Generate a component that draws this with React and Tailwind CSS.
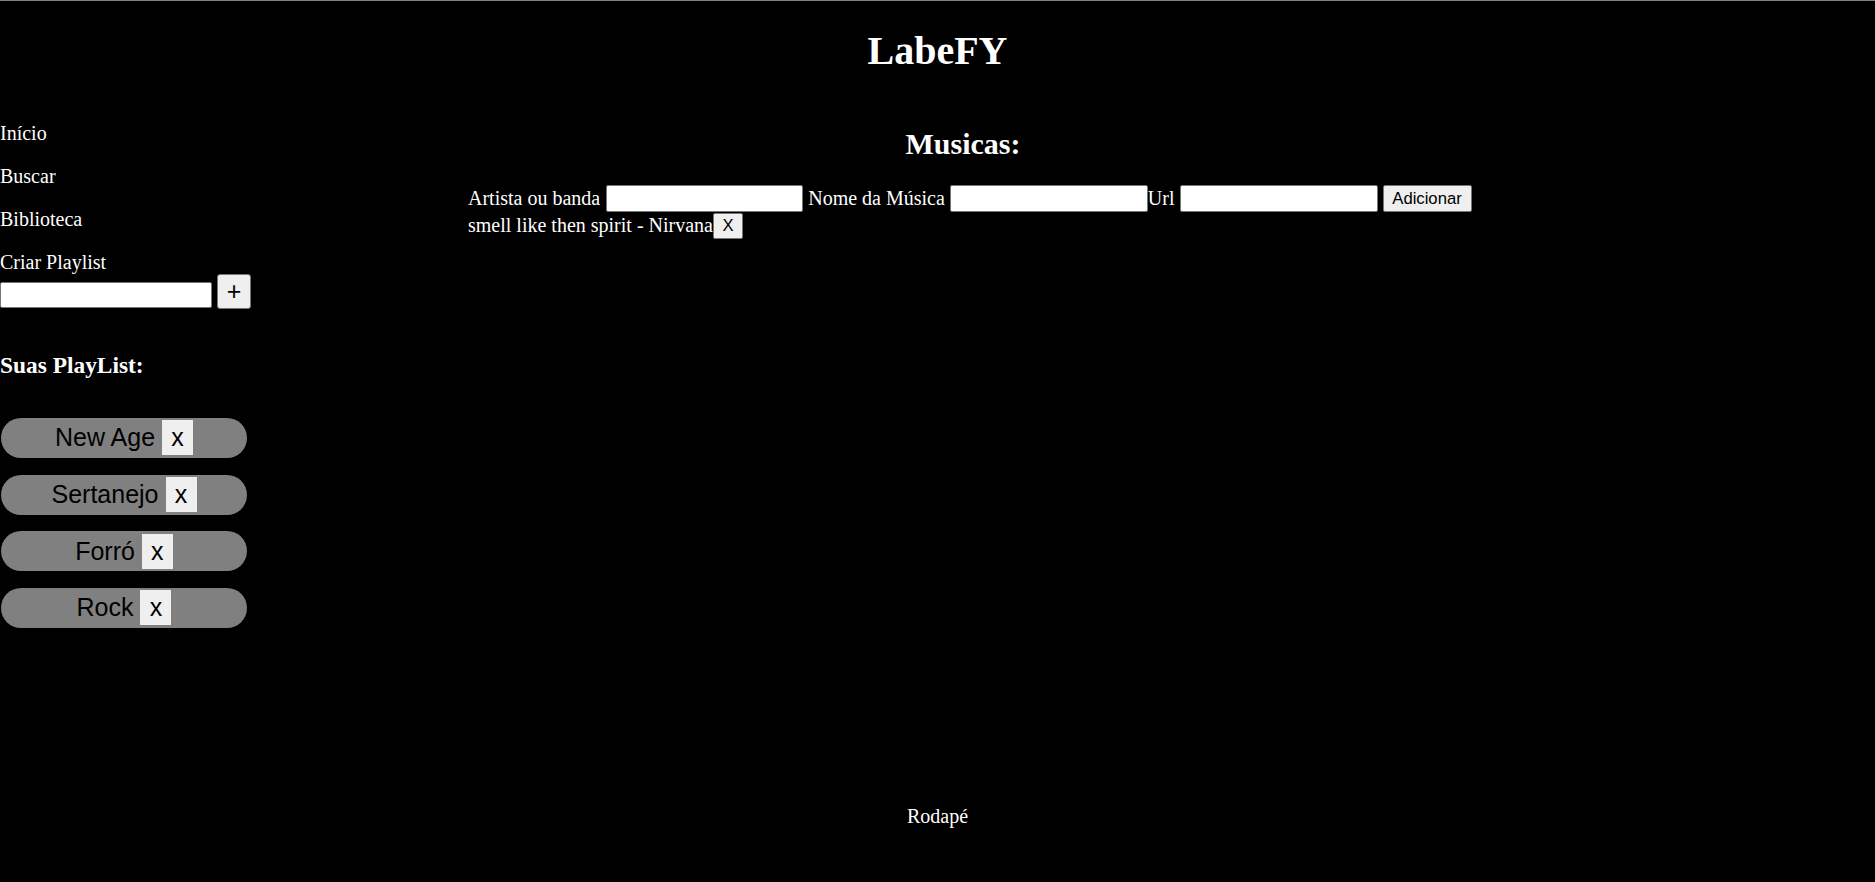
import { useState } from "react";

export default function App() {
  const [playlists, setPlaylists] = useState(["New Age", "Sertanejo", "Forró", "Rock"]);
  const [novaPlaylist, setNovaPlaylist] = useState("");
  const [musicas, setMusicas] = useState([{ nome: "smell like then spirit", artista: "Nirvana", url: "" }]);
  const [form, setForm] = useState({ artista: "", nome: "", url: "" });

  const handleChange = (e) => { setForm({ ...form, [e.target.name]: e.target.value }); };
  const adicionarPlaylist = () => {
    if (!novaPlaylist) return;
    setPlaylists([...playlists, novaPlaylist]); setNovaPlaylist("");
  };
  const adicionarMusica = () => {
    if (!form.nome) return;
    setMusicas([...musicas, form]); setForm({ artista: "", nome: "", url: "" });
  };

  return (
    <div className="h-[882px] flex flex-col bg-black text-white border-t border-[#808080] font-['Liberation_Serif',serif] text-[20px] leading-[23px]">
      <header className="h-[101px] pt-[27px] text-center">
        <h1 className="text-[40px] leading-[46px] font-bold">LabeFY</h1>
      </header>

      <div className="flex flex-1">
        {/* Menu lateral */}
        <aside className="w-[468px] shrink-0 pt-[20px]">
          {["Início", "Buscar", "Biblioteca"].map((item) => (
            <p key={item} className="mb-[20px]">{item}</p>
          ))}
          <p>Criar Playlist</p>
          <div className="flex items-end">
            <input value={novaPlaylist} onChange={(e) => setNovaPlaylist(e.target.value)}
              className="w-[212px] h-[26px] mb-[1px] px-[2px] bg-white border border-[#767676] rounded-[2px] text-black text-[16.67px] font-['Liberation_Sans',sans-serif] outline-none" />
            <button onClick={adicionarPlaylist}
              className="ml-[5px] w-[34px] h-[35px] bg-[#efefef] border border-[#767676] rounded-[3px] text-black text-[25px] leading-none font-['Liberation_Sans',sans-serif]">+</button>
          </div>

          <h3 className="mt-[42.6px] text-[23.4px] leading-[27px] font-bold">Suas PlayList:</h3>
          <div className="mt-[39.4px] flex flex-col gap-[16.67px]">
            {playlists.map((p, i) => (
              <div key={p + i}
                className="ml-[1px] w-[246px] h-[40px] rounded-full bg-[#808080] flex items-center justify-center text-black text-[25px] font-['Liberation_Sans',sans-serif]">
                <span className="whitespace-nowrap">{p}</span>
                <button onClick={() => setPlaylists(playlists.filter((_, j) => j !== i))}
                  className="ml-[7px] w-[31px] h-[35px] shrink-0 bg-[#efefef] leading-none">x</button>
              </div>
            ))}
          </div>
        </aside>

        {/* Musicas */}
        <main className="w-[990px] shrink-0">
          <h2 className="mt-[24.6px] mb-[24.4px] text-center text-[30px] leading-[34.5px] font-bold">Musicas:</h2>
          <div className="flex items-center h-[27px] whitespace-nowrap">
            <span className="shrink-0">Artista ou banda</span>
            <input name="artista" value={form.artista} onChange={handleChange}
              className="ml-[6px] w-[197px] h-[27px] shrink-0 px-[2px] bg-white border border-[#767676] rounded-[2px] text-black text-[16.67px] font-['Liberation_Sans',sans-serif] outline-none" />
            <span className="ml-[5px] shrink-0">Nome da Música</span>
            <input name="nome" value={form.nome} onChange={handleChange}
              className="ml-[5px] w-[198px] h-[27px] shrink-0 px-[2px] bg-white border border-[#767676] rounded-[2px] text-black text-[16.67px] font-['Liberation_Sans',sans-serif] outline-none" />
            <span className="shrink-0">Url</span>
            <input name="url" value={form.url} onChange={handleChange}
              className="ml-[5px] w-[198px] h-[27px] shrink-0 px-[2px] bg-white border border-[#767676] rounded-[2px] text-black text-[16.67px] font-['Liberation_Sans',sans-serif] outline-none" />
            <button onClick={adicionarMusica}
              className="ml-[5px] w-[89px] h-[27px] shrink-0 bg-[#efefef] border border-[#767676] rounded-[2px] text-black text-[16.67px] leading-none font-['Liberation_Sans',sans-serif]">Adicionar</button>
          </div>
          {musicas.map((m, i) => (
            <div key={m.nome + i} className="flex items-center h-[27px] whitespace-nowrap">
              <span className="shrink-0">{m.nome} - {m.artista}</span>
              <button onClick={() => setMusicas(musicas.filter((_, j) => j !== i))}
                className="w-[30px] h-[26px] mt-[1px] shrink-0 bg-[#efefef] border border-[#767676] rounded-[2px] text-black text-[16.67px] leading-none font-['Liberation_Sans',sans-serif]">X</button>
            </div>
          ))}
        </main>
      </div>

      <footer className="pb-[54px] text-center">Rodapé</footer>
    </div>
  );
}
